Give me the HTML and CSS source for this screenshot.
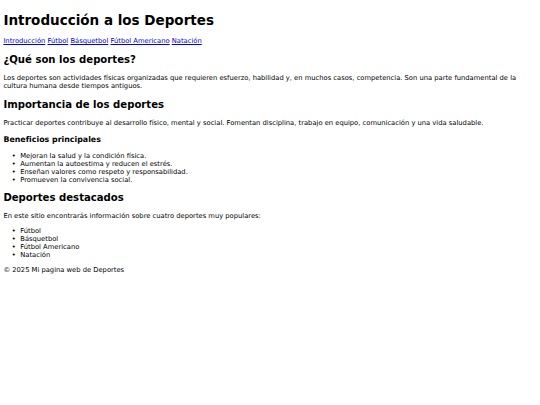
FILE: index.html
```html
<!DOCTYPE html>
<html lang="es">
<head>
<meta charset="utf-8">
<title>Introducción a los Deportes</title>
<link rel="stylesheet" href="styles.css">
</head>
<body>
<header>
<h1>Introducción a los Deportes</h1>
<nav class="nav">
<a href="#">Introducción</a>
<a href="#">Fútbol</a>
<a href="#">Básquetbol</a>
<a href="#">Fútbol Americano</a>
<a href="#">Natación</a>
</nav>
</header>
<main>
<section>
<h2>¿Qué son los deportes?</h2>
<p>Los deportes son actividades físicas organizadas que requieren esfuerzo, habilidad y, en muchos casos, competencia. Son una parte fundamental de la cultura humana desde tiempos antiguos.</p>
</section>
<section>
<h2>Importancia de los deportes</h2>
<p>Practicar deportes contribuye al desarrollo físico, mental y social. Fomentan disciplina, trabajo en equipo, comunicación y una vida saludable.</p>
<h3>Beneficios principales</h3>
<ul class="list">
<li>Mejoran la salud y la condición física.</li>
<li>Aumentan la autoestima y reducen el estrés.</li>
<li>Enseñan valores como respeto y responsabilidad.</li>
<li>Promueven la convivencia social.</li>
</ul>
</section>
<section>
<h2>Deportes destacados</h2>
<p>En este sitio encontrarás información sobre cuatro deportes muy populares:</p>
<ul class="list">
<li>Fútbol</li>
<li>Básquetbol</li>
<li>Fútbol Americano</li>
<li>Natación</li>
</ul>
</section>
</main>
<footer>
<p>© 2025 Mi pagina web de Deportes</p>
</footer>
</body>
</html>
```
FILE: styles.css
```css
html {
  background: #ffffff;
}
body {
  margin: 3.375px;
  font-family: "DejaVu Sans", Verdana, sans-serif;
  font-size: 6.75px;
  line-height: 8.016px;
  color: #000000;
}
h1 {
  font-size: 13.5px;
  line-height: 16.03px;
  margin: 9.045px 0;
}
h2 {
  font-size: 10.125px;
  line-height: 11.81px;
  margin: 8.404px 0;
}
h3 {
  font-size: 7.898px;
  line-height: 9.28px;
  margin: 7.898px 0;
}
p {
  margin: 6.75px 0;
}
.list {
  margin: 6.75px 0;
  padding-left: 16.875px;
  list-style: none;
}
.list li::before {
  content: "\2022";
  display: inline-block;
  width: 8.5px;
  margin-left: -8.5px;
}
a {
  color: #0000ee;
}
```
